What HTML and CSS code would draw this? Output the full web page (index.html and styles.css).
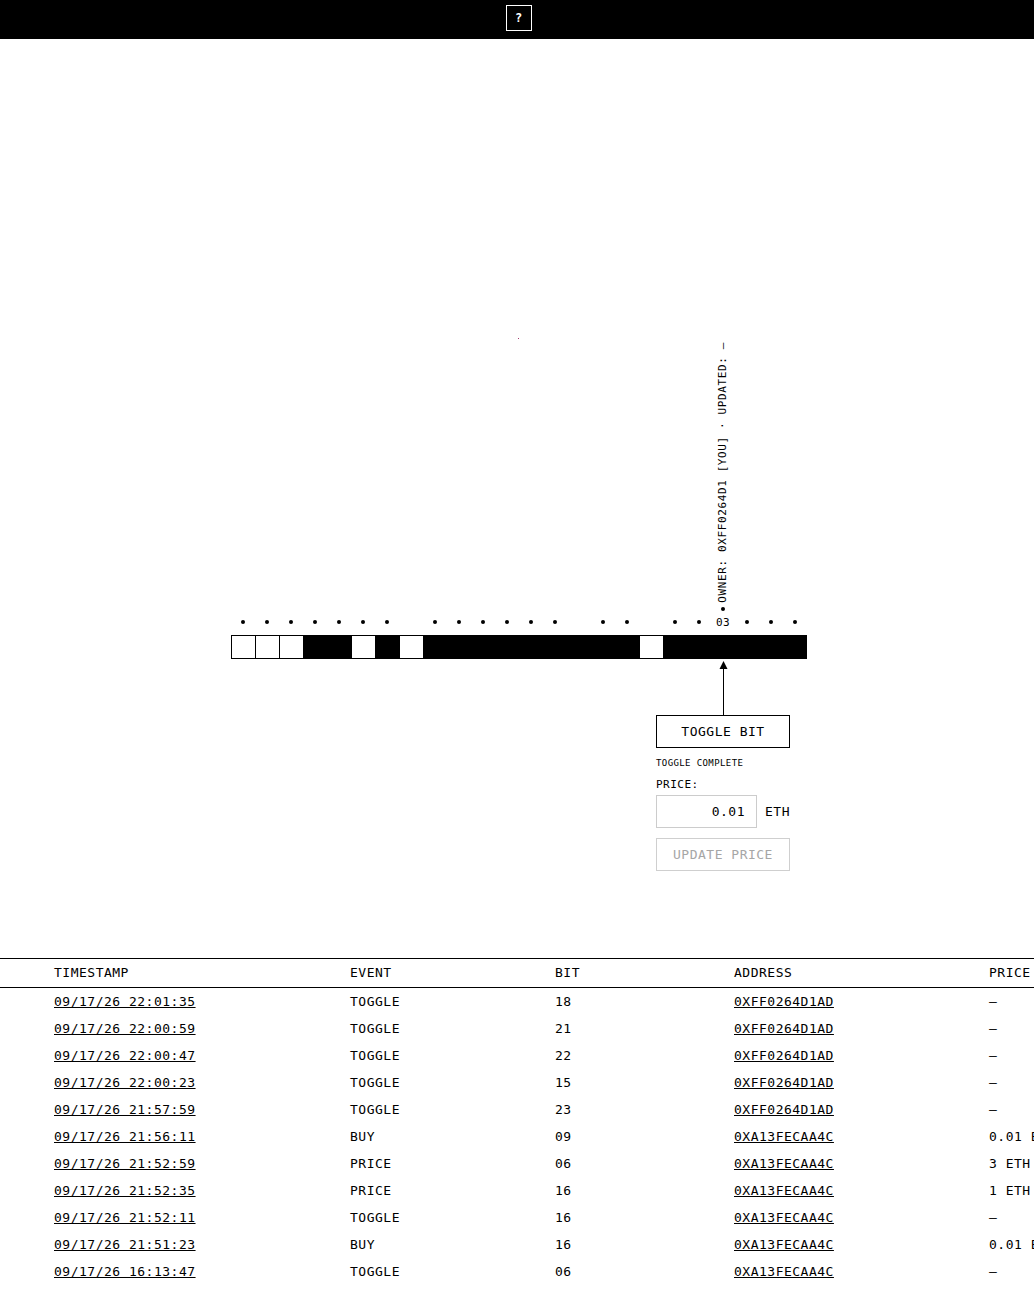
FILE: index.html
```html
<!DOCTYPE html>
<html lang="en">
<head>
<meta charset="utf-8">
<title>Bits</title>
<link rel="stylesheet" href="styles.css">
</head>
<body>
<header class="topbar">
  <button class="help" type="button">?</button>
</header>

<main class="stage">
  <div class="bits">
    <span class="pin"></span>
    <div class="col"><span class="slot"><i class="dot"></i></span><span class="cell off"></span></div>
    <div class="col"><span class="slot"><i class="dot"></i></span><span class="cell off"></span></div>
    <div class="col"><span class="slot"><i class="dot"></i></span><span class="cell off"></span></div>
    <div class="col"><span class="slot"><i class="dot"></i></span><span class="cell on"></span></div>
    <div class="col"><span class="slot"><i class="dot"></i></span><span class="cell on"></span></div>
    <div class="col"><span class="slot"><i class="dot"></i></span><span class="cell off"></span></div>
    <div class="col"><span class="slot"><i class="dot"></i></span><span class="cell on"></span></div>
    <div class="col"><span class="slot"></span><span class="cell off"></span></div>
    <div class="col"><span class="slot"><i class="dot"></i></span><span class="cell on"></span></div>
    <div class="col"><span class="slot"><i class="dot"></i></span><span class="cell on"></span></div>
    <div class="col"><span class="slot"><i class="dot"></i></span><span class="cell on"></span></div>
    <div class="col"><span class="slot"><i class="dot"></i></span><span class="cell on"></span></div>
    <div class="col"><span class="slot"><i class="dot"></i></span><span class="cell on"></span></div>
    <div class="col"><span class="slot"><i class="dot"></i></span><span class="cell on"></span></div>
    <div class="col"><span class="slot"></span><span class="cell on"></span></div>
    <div class="col"><span class="slot"><i class="dot"></i></span><span class="cell on"></span></div>
    <div class="col"><span class="slot"><i class="dot"></i></span><span class="cell on"></span></div>
    <div class="col"><span class="slot"></span><span class="cell off"></span></div>
    <div class="col"><span class="slot"><i class="dot"></i></span><span class="cell on"></span></div>
    <div class="col"><span class="slot"><i class="dot"></i></span><span class="cell on"></span></div>
    <div class="col sel">
      <span class="marker">OWNER: 0XFF0264D1 [YOU] · UPDATED: —</span>
      <i class="dot mark-dot"></i>
      <span class="slot label">03</span>
      <span class="cell on"></span>
    </div>
    <div class="col"><span class="slot"><i class="dot"></i></span><span class="cell on"></span></div>
    <div class="col"><span class="slot"><i class="dot"></i></span><span class="cell on"></span></div>
    <div class="col"><span class="slot"><i class="dot"></i></span><span class="cell on"></span></div>
  </div>

  <div class="panel">
    <svg class="arrow" width="10" height="56" viewBox="0 0 10 56" aria-hidden="true">
      <polygon points="5.5,2 1.5,10 9.5,10" fill="#000"/>
      <line x1="5.5" y1="9" x2="5.5" y2="56" stroke="#000" stroke-width="1"/>
    </svg>
    <button class="btn" type="button">TOGGLE BIT</button>
    <div class="status">TOGGLE COMPLETE</div>
    <div class="price-label">PRICE:</div>
    <div class="price-row">
      <input class="price-input" type="text" value="0.01">
      <span class="unit">ETH</span>
    </div>
    <button class="btn disabled" type="button" disabled>UPDATE PRICE</button>
  </div>
</main>

<section class="log">
  <table>
    <colgroup>
      <col class="c1"><col class="c2"><col class="c3"><col class="c4"><col class="c5">
    </colgroup>
    <thead>
      <tr><th>TIMESTAMP</th><th>EVENT</th><th>BIT</th><th>ADDRESS</th><th>PRICE</th></tr>
    </thead>
    <tbody>
      <tr><td><a href="#">09/17/26 22:01:35</a></td><td>TOGGLE</td><td>18</td><td><a href="#">0XFF0264D1AD</a></td><td>—</td></tr>
      <tr><td><a href="#">09/17/26 22:00:59</a></td><td>TOGGLE</td><td>21</td><td><a href="#">0XFF0264D1AD</a></td><td>—</td></tr>
      <tr><td><a href="#">09/17/26 22:00:47</a></td><td>TOGGLE</td><td>22</td><td><a href="#">0XFF0264D1AD</a></td><td>—</td></tr>
      <tr><td><a href="#">09/17/26 22:00:23</a></td><td>TOGGLE</td><td>15</td><td><a href="#">0XFF0264D1AD</a></td><td>—</td></tr>
      <tr><td><a href="#">09/17/26 21:57:59</a></td><td>TOGGLE</td><td>23</td><td><a href="#">0XFF0264D1AD</a></td><td>—</td></tr>
      <tr><td><a href="#">09/17/26 21:56:11</a></td><td>BUY</td><td>09</td><td><a href="#">0XA13FECAA4C</a></td><td>0.01 ETH</td></tr>
      <tr><td><a href="#">09/17/26 21:52:59</a></td><td>PRICE</td><td>06</td><td><a href="#">0XA13FECAA4C</a></td><td>3 ETH</td></tr>
      <tr><td><a href="#">09/17/26 21:52:35</a></td><td>PRICE</td><td>16</td><td><a href="#">0XA13FECAA4C</a></td><td>1 ETH</td></tr>
      <tr><td><a href="#">09/17/26 21:52:11</a></td><td>TOGGLE</td><td>16</td><td><a href="#">0XA13FECAA4C</a></td><td>—</td></tr>
      <tr><td><a href="#">09/17/26 21:51:23</a></td><td>BUY</td><td>16</td><td><a href="#">0XA13FECAA4C</a></td><td>0.01 ETH</td></tr>
      <tr><td><a href="#">09/17/26 16:13:47</a></td><td>TOGGLE</td><td>06</td><td><a href="#">0XA13FECAA4C</a></td><td>—</td></tr>
    </tbody>
  </table>
</section>
</body>
</html>
```

FILE: styles.css
```css
* { box-sizing: border-box; }

html, body {
  margin: 0;
  padding: 0;
  background: #fff;
  color: #000;
  overflow: hidden;
}

body {
  font-family: "DejaVu Sans Mono", "Liberation Mono", monospace;
  font-size: 13px;
  letter-spacing: 0.5px;
}

.topbar {
  height: 39px;
  background: #000;
  display: flex;
  justify-content: center;
  align-items: flex-start;
  padding-top: 5px;
  padding-left: 3px;
}

.help {
  width: 26px;
  height: 26px;
  padding: 0;
  border: 1px solid #fff;
  background: #000;
  color: #fff;
  font-family: "DejaVu Sans Mono", monospace;
  font-size: 12px;
  font-weight: bold;
  line-height: 24px;
  text-align: center;
}

.stage {
  padding-top: 300px;
}

.bits {
  position: relative;
  display: flex;
  align-items: flex-end;
  height: 320px;
  width: 576px;
  margin-left: calc(50% - 286px);
}

.pin {
  position: absolute;
  left: 287px;
  top: -1px;
  width: 1px;
  height: 1px;
  background: #a23a6e;
}

.col {
  width: 24px;
  display: flex;
  flex-direction: column;
  align-items: center;
}

.slot {
  height: 14px;
  width: 24px;
  margin-bottom: 6px;
  display: flex;
  align-items: center;
  justify-content: center;
}

.dot {
  display: block;
  width: 4px;
  height: 4px;
  border-radius: 50%;
  background: #000;
}

.label {
  font-size: 11px;
  line-height: 14px;
  letter-spacing: 0.5px;
  padding-top: 1px;
}

.marker {
  writing-mode: vertical-rl;
  transform: rotate(180deg);
  font-size: 11px;
  line-height: 13px;
  letter-spacing: 0.62px;
  white-space: nowrap;
  margin-bottom: 4px;
  margin-right: 2px;
}

.mark-dot {
  margin-bottom: 4px;
}

.cell {
  display: block;
  width: 24px;
  height: 24px;
  border-top: 1px solid #000;
  border-bottom: 1px solid #000;
  border-left: 1px solid #000;
}

.cell.on { background: #000; }
.cell.off { background: #fff; }

.panel {
  width: 134px;
  margin-left: calc(50% - 286px + 425px);
  display: flex;
  flex-direction: column;
  align-items: flex-start;
}

.arrow {
  display: block;
  align-self: center;
}

.btn {
  width: 134px;
  height: 33px;
  padding: 0;
  border: 1px solid #000;
  background: #fff;
  color: #000;
  font-family: "DejaVu Sans Mono", monospace;
  font-size: 13px;
  letter-spacing: 0.5px;
  text-align: center;
}

.btn.disabled {
  border-color: #cfcfcf;
  color: #a6a6a6;
  margin-top: 10px;
}

.status {
  margin-top: 9px;
  font-size: 9px;
  line-height: 12px;
  letter-spacing: 0.4px;
}

.price-label {
  margin-top: 9px;
  font-size: 11px;
  line-height: 13px;
  letter-spacing: 0.5px;
}

.price-row {
  margin-top: 4px;
  display: flex;
  align-items: center;
}

.price-input {
  width: 101px;
  height: 33px;
  border: 1px solid #cccccc;
  padding: 0 11px 0 4px;
  text-align: right;
  font-family: "DejaVu Sans Mono", monospace;
  font-size: 13px;
  letter-spacing: 0.5px;
  color: #000;
  background: #fff;
  outline: none;
}

.unit {
  margin-left: 8px;
}

.log {
  margin-top: 87px;
  overflow: hidden;
}

table {
  border-collapse: collapse;
  table-layout: fixed;
  width: 1139px;
}

.c1 { width: 350px; }
.c2 { width: 205px; }
.c3 { width: 179px; }
.c4 { width: 255px; }
.c5 { width: 150px; }

th {
  font-weight: normal;
  text-align: left;
  height: 29px;
  padding: 0 0 1px;
  border-top: 1px solid #000;
  border-bottom: 1px solid #000;
  vertical-align: middle;
  white-space: nowrap;
}

td {
  height: 27px;
  padding: 0;
  vertical-align: middle;
  white-space: nowrap;
}

th:first-child, td:first-child {
  padding-left: 54px;
}

a {
  color: #000;
  text-decoration: underline;
}
```
